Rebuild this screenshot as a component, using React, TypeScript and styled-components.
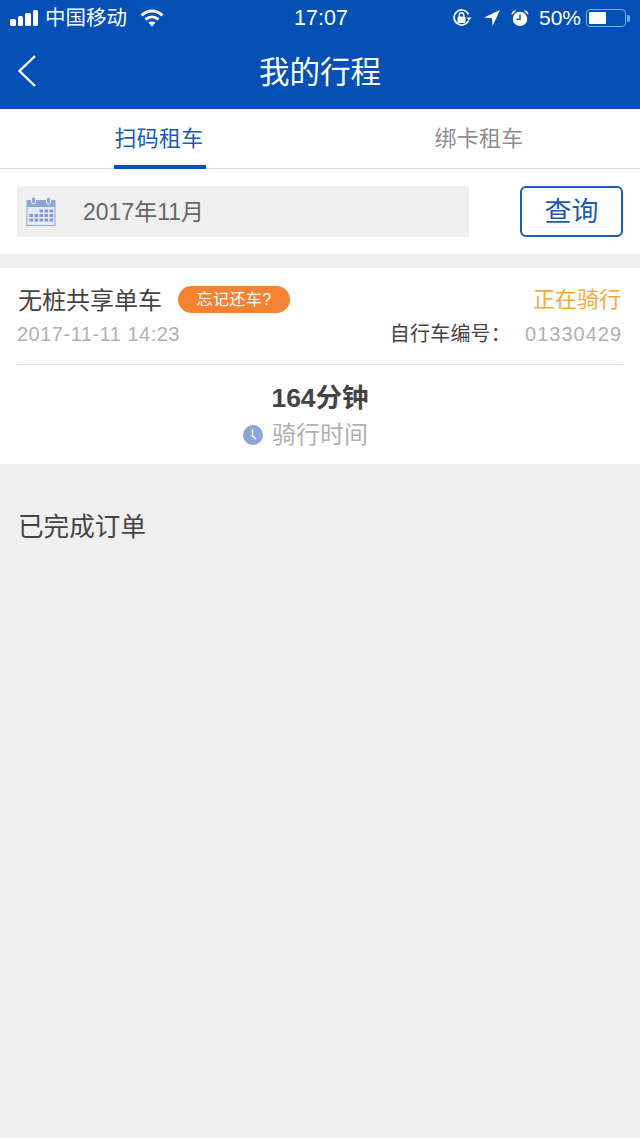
import React from "react";
import styled, { createGlobalStyle } from "styled-components";

const GlobalStyle = createGlobalStyle`
  html, body {
    margin: 0;
    padding: 0;
    background: #efefef;
  }
  * {
    box-sizing: border-box;
  }
`;

const calendarColumns = [3.5, 8.5, 13.5, 18.5, 23.5];
const calendarRows = [12.5, 17, 21.5];

const App = () => {
  return (
    <>
      <GlobalStyle />
      <StyledPage>
        <StyledHeader>
          <StyledStatusBar>
            <StyledStatusGroup>
              <StyledSignal>
                <StyledSignalBar $height={7} />
                <StyledSignalBar $height={10} />
                <StyledSignalBar $height={13} />
                <StyledSignalBar $height={16} />
              </StyledSignal>
              <StyledCarrier>中国移动</StyledCarrier>
              <svg width="24" height="18" viewBox="0 0 24 18" fill="none" stroke="#fff">
                <path d="M1.5 6.5C8 .5 16 .5 22.5 6.5" strokeWidth="3" />
                <path d="M5.5 10.5C9.5 7 14.5 7 18.5 10.5" strokeWidth="3" />
                <path d="M12 17.5L8.4 13.6C10.4 12.1 13.6 12.1 15.6 13.6Z" fill="#fff" stroke="none" />
              </svg>
            </StyledStatusGroup>
            <StyledClock>17:07</StyledClock>
            <StyledStatusRight>
              <svg width="20" height="20" viewBox="0 0 20 20" fill="none">
                <path d="M16.5 12.5A7.5 7.5 0 1 1 16.5 6.5" stroke="#fff" strokeWidth="1.7" />
                <path d="M14.5 9.5h5l-2.5 3z" fill="#fff" />
                <rect x="5.5" y="8.5" width="8" height="6.5" rx="1" fill="#fff" />
                <path d="M7.2 8.5V7a2.3 2.3 0 0 1 4.6 0v1.5" stroke="#fff" strokeWidth="1.4" />
              </svg>
              <StyledLocation width="18" height="18" viewBox="0 0 18 18">
                <path d="M17 1L1 8.6L9 9.2L9.6 17Z" fill="#fff" />
              </StyledLocation>
              <StyledAlarm width="18" height="18" viewBox="0 0 20 20">
                <circle cx="10" cy="11" r="8" fill="#fff" />
                <path d="M.8 6.8L6 1.8C3 .8 .2 3.4 .8 6.8ZM19.2 6.8L14 1.8C17 .8 19.8 3.4 19.2 6.8Z" fill="#fff" />
                <path d="M10 6V11.5H6" stroke="#0450b4" strokeWidth="1.6" fill="none" />
              </StyledAlarm>
              <StyledPercent>50%</StyledPercent>
              <StyledBattery>
                <StyledBatteryLevel $level={50} />
              </StyledBattery>
              <StyledBatteryCap />
            </StyledStatusRight>
          </StyledStatusBar>
          <StyledNavBar>
            <StyledBack width="20" height="32" viewBox="0 0 20 32" fill="none">
              <path d="M18 1L2.5 16L18 31" stroke="#fff" strokeWidth="2.4" />
            </StyledBack>
            <StyledTitle>我的行程</StyledTitle>
          </StyledNavBar>
        </StyledHeader>

        <StyledTabs>
          <StyledTab $active>
            <StyledTabLabel $active>扫码租车</StyledTabLabel>
          </StyledTab>
          <StyledTab>
            <StyledTabLabel>绑卡租车</StyledTabLabel>
          </StyledTab>
        </StyledTabs>

        <StyledSearchRow>
          <StyledDateField>
            <svg width="30" height="30" viewBox="0 0 30 30">
              <rect x="0.5" y="3" width="29" height="26" fill="#8ca5d8" />
              <rect x="1.5" y="10" width="27" height="18" fill="#e6ebf6" />
              <rect x="5.5" y="0" width="4" height="7" rx="2" fill="#8ca5d8" stroke="#efefef" />
              <rect x="20.5" y="0" width="4" height="7" rx="2" fill="#8ca5d8" stroke="#efefef" />
              {calendarRows.map((y, row) =>
                calendarColumns
                  .filter((_, column) => row > 0 || column > 1)
                  .map((x) => <rect key={`${x}-${y}`} x={x} y={y} width="3.6" height="3" fill="#7f9ad2" />)
              )}
            </svg>
            <StyledDateText>2017年11月</StyledDateText>
          </StyledDateField>
          <StyledQueryButton>查询</StyledQueryButton>
        </StyledSearchRow>

        <StyledCard>
          <StyledCardTop>
            <StyledRow>
              <StyledNameGroup>
                <StyledName>无桩共享单车</StyledName>
                <StyledBadge>忘记还车?</StyledBadge>
              </StyledNameGroup>
              <StyledStatus>正在骑行</StyledStatus>
            </StyledRow>
            <StyledMetaRow>
              <StyledDate>2017-11-11 14:23</StyledDate>
              <StyledBikeInfo>
                <StyledBikeLabel>自行车编号：</StyledBikeLabel>
                <StyledBikeNumber>01330429</StyledBikeNumber>
              </StyledBikeInfo>
            </StyledMetaRow>
          </StyledCardTop>
          <StyledDuration>164分钟</StyledDuration>
          <StyledDurationLabel>
            <StyledClockIcon width="20" height="20" viewBox="0 0 20 20">
              <circle cx="10" cy="10" r="10" fill="#8ca5d8" />
              <path d="M9.5 4.5V11L13 14" stroke="#fff" strokeWidth="1.5" fill="none" />
            </StyledClockIcon>
            骑行时间
          </StyledDurationLabel>
        </StyledCard>

        <StyledSectionTitle>已完成订单</StyledSectionTitle>
      </StyledPage>
    </>
  );
};

const fontStack = `"Liberation Sans", "Noto Sans CJK SC", sans-serif`;

const StyledPage = styled.div`
  width: 640px;
  height: 1138px;
  overflow: hidden;
  background: #efefef;
  font-family: ${fontStack};
`;

const StyledHeader = styled.header`
  height: 109px;
  background: #0450b4;
  color: #fff;
`;

const StyledStatusBar = styled.div`
  display: grid;
  grid-template-columns: 1fr auto 1fr;
  align-items: center;
  height: 36px;
  padding: 0 10px 0 10px;
`;

const StyledStatusGroup = styled.div`
  display: flex;
  align-items: center;
`;

const StyledSignal = styled.div`
  display: flex;
  align-items: flex-end;
  gap: 2px;
  height: 16px;
`;

const StyledSignalBar = styled.span<{ $height: number }>`
  width: 5.5px;
  height: ${(props) => props.$height}px;
  border-radius: 1.5px;
  background: #fff;
`;

const StyledCarrier = styled.span`
  margin: 0 13px 0 7px;
  font-size: 20.5px;
  line-height: 36px;
`;

const StyledClock = styled.span`
  margin-left: 2px;
  font-size: 21.5px;
  line-height: 36px;
`;

const StyledStatusRight = styled.div`
  display: flex;
  align-items: center;
  justify-content: flex-end;
`;

const StyledLocation = styled.svg`
  margin-left: 11px;
`;

const StyledAlarm = styled.svg`
  margin-left: 10px;
`;

const StyledPercent = styled.span`
  margin-left: 10px;
  font-size: 21px;
  line-height: 36px;
`;

const StyledBattery = styled.div`
  width: 40px;
  height: 18px;
  margin-left: 5px;
  padding: 2px;
  border: 1.5px solid #86a8db;
  border-radius: 4px;
`;

const StyledBatteryLevel = styled.div<{ $level: number }>`
  width: ${(props) => props.$level}%;
  height: 100%;
  border-radius: 1px;
  background: #fff;
`;

const StyledBatteryCap = styled.span`
  width: 3px;
  height: 7px;
  margin-left: 1px;
  border-radius: 0 2px 2px 0;
  background: #86a8db;
`;

const StyledNavBar = styled.div`
  position: relative;
  display: flex;
  align-items: center;
  justify-content: center;
  height: 73px;
`;

const StyledBack = styled.svg`
  position: absolute;
  left: 17px;
  top: 19px;
`;

const StyledTitle = styled.h1`
  margin: 0;
  font-size: 30.5px;
  font-weight: 400;
  line-height: 73px;
`;

const StyledTabs = styled.nav`
  display: flex;
  height: 60px;
  background: #fff;
  border-bottom: 1px solid #dcdcdc;
`;

const StyledTab = styled.div<{ $active?: boolean }>`
  display: flex;
  flex: 1;
  justify-content: center;
`;

const StyledTabLabel = styled.span<{ $active?: boolean }>`
  width: 92px;
  height: 60px;
  padding-right: 2px;
  border-bottom: 4px solid ${(props) => (props.$active ? "#0450b4" : "transparent")};
  color: ${(props) => (props.$active ? "#1a5cb4" : "#8e8e8e")};
  font-size: 22px;
  letter-spacing: 0.2px;
  line-height: 60px;
  text-align: center;
`;

const StyledSearchRow = styled.div`
  display: flex;
  align-items: flex-start;
  justify-content: space-between;
  height: 85px;
  padding: 17px 17px 0;
  background: #fff;
`;

const StyledDateField = styled.div`
  display: flex;
  align-items: center;
  width: 452px;
  height: 51px;
  padding-left: 9px;
  background: #efefef;
`;

const StyledDateText = styled.span`
  margin-left: 27px;
  padding-bottom: 4px;
  color: #666;
  font-size: 23px;
`;

const StyledQueryButton = styled.button`
  width: 103px;
  height: 51px;
  padding: 0 0 4px;
  background: #fff;
  border: 2px solid #1a5cb4;
  border-radius: 6px;
  color: #1a5cb4;
  font-family: ${fontStack};
  font-size: 27px;
`;

const StyledCard = styled.section`
  height: 196px;
  margin-top: 14px;
  padding: 0 17px;
  background: #fff;
`;

const StyledCardTop = styled.div`
  height: 97px;
  border-bottom: 1px solid #dcdcdc;
`;

const StyledRow = styled.div`
  display: flex;
  align-items: center;
  justify-content: space-between;
  height: 64px;
  padding: 0 2px 1px 1px;
`;

const StyledNameGroup = styled.div`
  display: flex;
  align-items: center;
`;

const StyledName = styled.span`
  padding-bottom: 2px;
  color: #444;
  font-size: 24px;
`;

const StyledBadge = styled.span`
  width: 112px;
  height: 27px;
  margin-left: 16px;
  border-radius: 14px;
  background: #f58232;
  color: #fff;
  font-size: 16px;
  letter-spacing: 0.4px;
  line-height: 27px;
  text-align: center;
`;

const StyledStatus = styled.span`
  padding-bottom: 6px;
  color: #f2a93b;
  font-size: 22px;
`;

const StyledMetaRow = styled.div`
  display: flex;
  align-items: center;
  justify-content: space-between;
  margin-top: -10px;
  padding-right: 1px;
  line-height: 24px;
`;

const StyledDate = styled.span`
  color: #b0b0b0;
  font-size: 20px;
  letter-spacing: 0.5px;
`;

const StyledBikeInfo = styled.div`
  display: flex;
  align-items: center;
  gap: 14px;
`;

const StyledBikeLabel = styled.span`
  color: #444;
  font-size: 20px;
  letter-spacing: 0.2px;
`;

const StyledBikeNumber = styled.span`
  color: #b0b0b0;
  font-size: 20px;
  letter-spacing: 1px;
`;

const StyledDuration = styled.div`
  margin-top: 16px;
  color: #444;
  font-size: 26.5px;
  font-weight: 700;
  line-height: 34px;
  text-align: center;
`;

const StyledDurationLabel = styled.div`
  display: flex;
  align-items: center;
  justify-content: center;
  gap: 9px;
  margin-top: 3px;
  color: #b0b0b0;
  font-size: 24px;
  line-height: 34px;
`;

const StyledClockIcon = styled.svg`
  margin-left: -29px;
`;

const StyledSectionTitle = styled.h2`
  margin: 46px 0 0 18px;
  color: #444;
  font-size: 25.6px;
  font-weight: 400;
  line-height: 34px;
`;

export default App;
